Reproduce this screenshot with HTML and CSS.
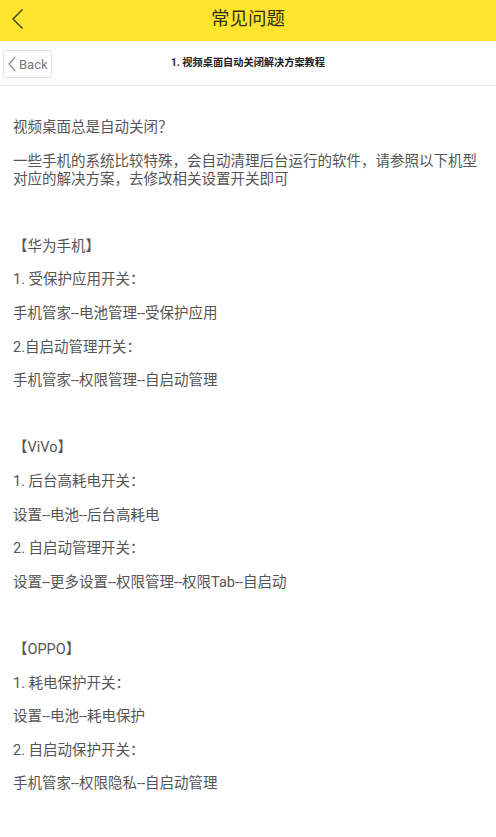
FILE: index.html
```html
<!DOCTYPE html>
<html lang="zh-CN">
<head>
<meta charset="utf-8">
<title>常见问题</title>
<link rel="stylesheet" href="styles.css">
</head>
<body>
<header class="topbar">
  <a class="topbar-back" href="#" aria-label="返回">
    <svg width="14" height="22" viewBox="0 0 14 22"><polyline points="11.5,1.5 2,11 11.5,20.5" fill="none" stroke="#3a3a2a" stroke-width="1.4"/></svg>
  </a>
  <h1 class="topbar-title">常见问题</h1>
</header>
<div class="subbar">
  <a class="back-btn" href="#">
    <svg width="8" height="16" viewBox="0 0 8 16"><polyline points="7,1 1,8 7,15" fill="none" stroke="#888" stroke-width="1.2"/></svg>
    <span>Back</span>
  </a>
  <h2 class="subbar-title">1. 视频桌面自动关闭解决方案教程</h2>
  <span class="subbar-spacer"></span>
</div>
<main class="article">
  <p>视频桌面总是自动关闭？</p>
  <p>一些手机的系统比较特殊，会自动清理后台运行的软件，请参照以下机型对应的解决方案，去修改相关设置开关即可</p>
  <p>&nbsp;</p>
  <p>【华为手机】</p>
  <p>1. 受保护应用开关：</p>
  <p>手机管家--电池管理--受保护应用</p>
  <p>2.自启动管理开关：</p>
  <p>手机管家--权限管理--自启动管理</p>
  <p>&nbsp;</p>
  <p>【ViVo】</p>
  <p>1. 后台高耗电开关：</p>
  <p>设置--电池--后台高耗电</p>
  <p>2. 自启动管理开关：</p>
  <p>设置--更多设置--权限管理--权限Tab--自启动</p>
  <p>&nbsp;</p>
  <p>【OPPO】</p>
  <p>1. 耗电保护开关：</p>
  <p>设置--电池--耗电保护</p>
  <p>2. 自启动保护开关：</p>
  <p>手机管家--权限隐私--自启动管理</p>
</main>
</body>
</html>
```
FILE: styles.css
```css
* { box-sizing: border-box; }
html, body {
  margin: 0;
  padding: 0;
  background: #fff;
  font-family: Roboto, "Noto Sans CJK SC", sans-serif;
}
.topbar {
  height: 41px;
  background: #ffe42e;
  display: flex;
  align-items: center;
  justify-content: center;
  position: relative;
}
.topbar-back {
  position: absolute;
  left: 11px;
  top: 8px;
  display: block;
  line-height: 0;
}
.topbar-title {
  margin: 0;
  font-size: 18.5px;
  font-weight: 400;
  color: #33301a;
  line-height: 1;
  padding-bottom: 3px;
}
.subbar {
  height: 45px;
  border-bottom: 1px solid #e6e6e6;
  display: grid;
  grid-template-columns: 1fr auto 1fr;
  align-items: center;
}
.back-btn {
  justify-self: start;
  margin-left: 3px;
  margin-top: 2px;
  width: 49px;
  height: 28px;
  border: 1px solid #e2e2e2;
  border-radius: 2px;
  display: flex;
  align-items: center;
  gap: 3px;
  padding-left: 4px;
  text-decoration: none;
  color: #7a7a7a;
  font-size: 13px;
}
.back-btn svg { display: block; }
.subbar-title {
  margin: 0;
  font-size: 10.2px;
  font-weight: 700;
  color: #222;
  line-height: 1;
}
.article {
  padding: 33px 13px 0;
  color: #555;
  font-size: 14.5px;
}
.article p {
  margin: 0 0 15.6px;
  line-height: 18px;
}
```
